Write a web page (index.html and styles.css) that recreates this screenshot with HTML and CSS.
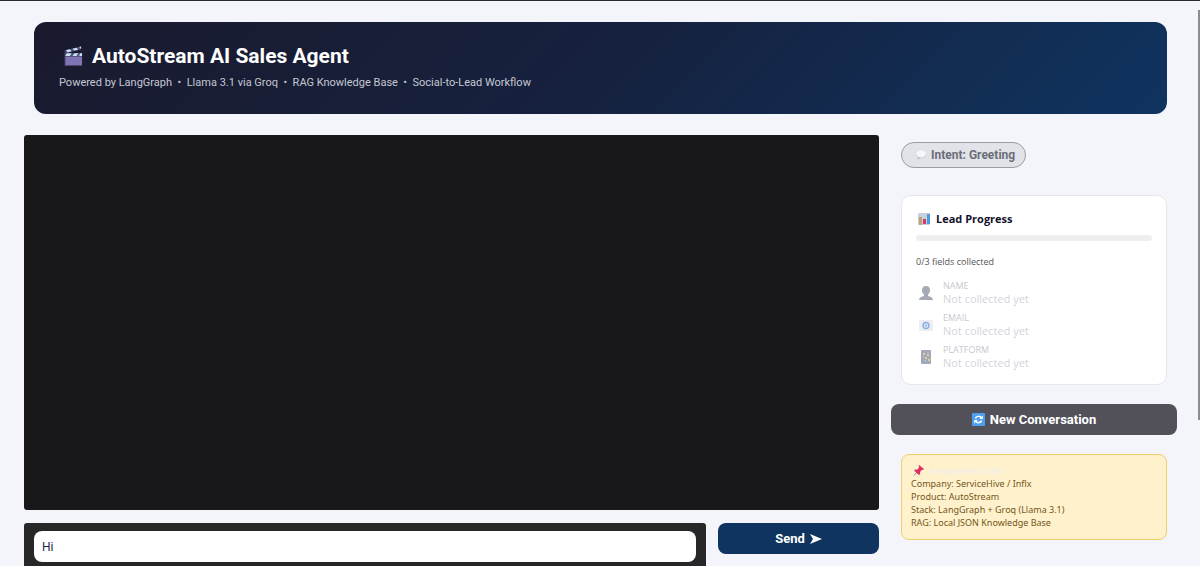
FILE: index.html
```
<!DOCTYPE html>
<html lang="en">
<head>
    <meta charset="UTF-8">
    <meta name="viewport" content="width=device-width, initial-scale=1.0">
    <title>AutoStream AI Sales Agent</title>
    <link rel="stylesheet" href="styles.css">
</head>
<body>
    <div class="app">
        <header class="header">
            <h1>
                <svg class="icon-clapper" viewBox="0 0 20 22" aria-hidden="true">
                    <rect x="1" y="9" width="18" height="12" fill="#8074b4"/>
                    <rect x="1" y="8" width="18" height="4" fill="#56547a"/>
                    <path d="M3 8h5l-2 3H1zM11 8h4l-2 3H9zM17 8h2v3h-3z" fill="#c6e2f5"/>
                    <path d="M1 5L18 1v3L2 8z" fill="#56547a"/>
                    <path d="M2 5l4-1 2 2-4 1zM9 3.300l4-1 2 2-4 1zM16 1.500l2-.5v2.500z" fill="#c6e2f5"/>
                    <path d="M1 5v16" stroke="#41405f" stroke-width="1"/>
                </svg>
                AutoStream AI Sales Agent
            </h1>
            <p>Powered by LangGraph &nbsp;•&nbsp; Llama 3.1 via Groq &nbsp;•&nbsp; RAG Knowledge Base &nbsp;•&nbsp; Social-to-Lead Workflow</p>
        </header>

        <div class="row">
            <main class="chat-col">
                <div class="chatbot"></div>
                <form class="composer">
                    <div class="input-box">
                        <input type="text" class="message" value="Hi" aria-label="Message">
                    </div>
                    <button type="button" class="btn btn-send">Send
                        <svg class="icon-send" viewBox="0 0 12 10" aria-hidden="true"><path d="M0 0l12 5-12 5 3-5z" fill="#fff"/></svg>
                    </button>
                </form>
            </main>

            <aside class="side-col">
                <div class="intent">
                    <svg class="icon-bubble" viewBox="0 0 12 12" aria-hidden="true">
                        <path d="M6 2c3 0 5 1.500 5 3.500S9 9 6 9L2 10.500 3 8.500C1.500 8 1 7 1 5.500 1 3.500 3 2 6 2z" fill="#b9bbc5"/>
                        <ellipse cx="6" cy="5" rx="5" ry="3.400" fill="#f5f6fa"/>
                    </svg>
                    Intent: Greeting
                </div>

                <section class="card">
                    <h2>
                        <svg class="icon-chart" viewBox="0 0 12 12" aria-hidden="true">
                            <rect width="12" height="12" rx="1" fill="#c9d0da"/>
                            <rect x="1" y="4" width="3" height="8" fill="#b8a678"/>
                            <rect x="5" y="6" width="3" height="5" fill="#d83a6c"/>
                            <rect x="9" y="1" width="3" height="10" fill="#4a9be0"/>
                        </svg>
                        Lead Progress
                    </h2>
                    <div class="bar"></div>
                    <p class="count">0/3 fields collected</p>
                    <ul class="fields">
                        <li>
                            <svg class="icon-field" viewBox="0 0 14 16" aria-hidden="true">
                                <path d="M7 1c2.500 0 4 1.500 4 4 0 2-.8 3.500-2 4.500v1.500c2 .6 4.500 1 5 4H0c.5-3 3-3.400 5-4V9.500C3.800 8.500 3 7 3 5c0-2.500 1.500-4 4-4z" fill="#a6aab5"/>
                            </svg>
                            <div><span class="label">NAME</span><span class="value">Not collected yet</span></div>
                        </li>
                        <li>
                            <svg class="icon-field" viewBox="0 0 14 16" aria-hidden="true">
                                <rect y="3" width="14" height="11" fill="#eceef2"/>
                                <circle cx="7" cy="8.500" r="3" fill="#dbe7f7" stroke="#8aaee0" stroke-width="1.400"/>
                                <circle cx="7" cy="8.500" r="1" fill="#8aaee0"/>
                            </svg>
                            <div><span class="label">EMAIL</span><span class="value">Not collected yet</span></div>
                        </li>
                        <li>
                            <svg class="icon-field" viewBox="0 0 14 16" aria-hidden="true">
                                <rect x="2" y="1" width="10" height="14" rx="1" fill="#a2a8b8"/>
                                <path d="M4 4h2v2H4zM8 5h2v2H8zM6 8h2v2H6zM9 10h2v2H9z" fill="#e6d08c"/>
                                <path d="M8 3h2v1H8zM4 7h1v2H4zM5 11h2v1H5z" fill="#9cc4ee"/>
                            </svg>
                            <div><span class="label">PLATFORM</span><span class="value">Not collected yet</span></div>
                        </li>
                    </ul>
                </section>

                <button type="button" class="btn btn-new">
                    <svg class="icon-refresh" viewBox="0 0 13 13" aria-hidden="true">
                        <rect width="13" height="13" rx="1" fill="#4c9ff0"/>
                        <path d="M3.500 5.500C4 3 8 2.500 9.500 5M9.500 7.500C9 10 5 10.500 3.500 8" fill="none" stroke="#fff" stroke-width="1.500"/>
                        <path d="M10.800 2.500v3.500H7.300zM2.200 10.500V7h3.500z" fill="#fff"/>
                    </svg>
                    New Conversation
                </button>

                <section class="note">
                    <h3>
                        <svg class="icon-pin" viewBox="0 0 11 11" aria-hidden="true">
                            <path d="M4 7L1 10.500" stroke="#8b8f98" stroke-width="1"/>
                            <path d="M6 0l5 4-1 1-1-.2-2 2.200.2 2L6 10 1 5.500l1-1 2 .2L6.200 2.500 5.500 1z" fill="#dd2f62"/>
                        </svg>
                        Assignment Info
                    </h3>
                    <p>Company: ServiceHive / Inflx</p>
                    <p>Product: AutoStream</p>
                    <p>Stack: LangGraph + Groq (Llama 3.1)</p>
                    <p>RAG: Local JSON Knowledge Base</p>
                </section>
            </aside>
        </div>
    </div>
    <div class="scroll-thumb"></div>
</body>
</html>
```

FILE: styles.css
```
*{
    box-sizing: border-box;
    margin: 0;
    padding: 0;
}
body{
    height: 100vh;
    overflow: hidden;
    border-top: 1px solid #2b2836;
    background: #f4f5fa;
    font-family: Roboto, "Noto Sans", sans-serif;
}
ul{
    list-style: none;
}
svg{
    flex: none;
}
.app{
    padding: 21px 23px 0 24px;
}
.header{
    height: 92px;
    margin: 0 10px 21px;
    padding: 20px 25px;
    border-radius: 12px;
    background: linear-gradient(135deg, #1a1a2e 0%, #16213e 50%, #0f3460 100%);
    color: #fff;
}
.header h1{
    display: flex;
    align-items: center;
    gap: 9px;
    padding-left: 5px;
    font-size: 21px;
    line-height: 28px;
    font-weight: 700;
}
.header p{
    margin-top: 5px;
    font-size: 11px;
    line-height: 16px;
    color: #c5c8d2;
}
.icon-clapper{
    width: 19px;
    height: 22px;
}

/* columns */
.row{
    display: flex;
    gap: 12px;
    align-items: flex-start;
}
.chat-col{
    flex: 3;
}
.side-col{
    flex: 1;
    min-width: 286px;
}
.chatbot{
    height: 375px;
    border-radius: 3px;
    background: #18181a;
}
.composer{
    display: flex;
    align-items: flex-start;
    gap: 12px;
    margin-top: 13px;
}
.input-box{
    flex: 1;
    height: 56px;
    padding: 8px 10px;
    border-radius: 3px;
    background: #27272a;
}
.message{
    display: block;
    width: 100%;
    height: 31px;
    padding: 0 8px;
    border: 0;
    border-radius: 8px;
    background: #fff;
    color: #1a2a4e;
    font-family: inherit;
    font-size: 12px;
}
.btn{
    display: flex;
    align-items: center;
    justify-content: center;
    gap: 5px;
    height: 31px;
    border: 0;
    border-radius: 8px;
    color: #fff;
    font-family: inherit;
    font-size: 13px;
    font-weight: 700;
}
.btn-send{
    width: 161px;
    background: #0f3460;
}
.icon-send{
    width: 12px;
    height: 10px;
}

/* side */
.intent{
    display: inline-flex;
    align-items: center;
    gap: 4px;
    height: 26px;
    margin: 7px 10px 27px;
    padding: 0 10px 0 13px;
    border: 1px solid #9a9ca3;
    border-radius: 13px;
    background: #e1e3e8;
    color: #6b6e78;
    font-size: 12px;
    font-weight: 700;
    vertical-align: top;
}
.icon-bubble{
    width: 12px;
    height: 12px;
}
.card{
    height: 190px;
    margin: 0 10px 19px;
    padding: 14px;
    border: 1px solid #e6e7ec;
    border-radius: 10px;
    background: #fff;
}
.card h2{
    display: flex;
    align-items: center;
    gap: 6px;
    padding-left: 2px;
    color: #12122a;
    font-family: "Open Sans", sans-serif;
    font-size: 11px;
    line-height: 18px;
    font-weight: 700;
}
.icon-chart{
    width: 12px;
    height: 12px;
}
.bar{
    height: 6px;
    margin-top: 7px;
    border-radius: 3px;
    background: #eeeeef;
}
.count{
    margin-top: 14px;
    color: #555;
    font-family: "Open Sans", sans-serif;
    font-size: 9px;
    line-height: 14px;
}
.fields{
    margin-top: 8px;
}
.fields li{
    display: flex;
    align-items: center;
    gap: 10px;
    height: 32px;
    padding-left: 3px;
}
.icon-field{
    width: 14px;
    height: 16px;
}
.label, .value{
    display: block;
    font-family: "Open Sans", sans-serif;
}
.label{
    color: #c6c8cf;
    font-size: 9px;
    line-height: 12px;
}
.value{
    color: #d2d4da;
    font-size: 11px;
    line-height: 14px;
}
.btn-new{
    width: 100%;
    background: #52515a;
}
.icon-refresh{
    width: 13px;
    height: 13px;
}
.note{
    height: 86px;
    margin: 19px 10px 0;
    padding: 9px;
    border: 1px solid #f0cf68;
    border-radius: 8px;
    background: #fff1cc;
    color: #73561a;
    font-family: "Noto Sans", sans-serif;
    font-size: 9px;
    line-height: 13px;
}
.note h3{
    display: flex;
    align-items: center;
    gap: 4px;
    padding-left: 2px;
    color: #f4efe6;
    font-size: 9px;
    line-height: 13px;
}
.icon-pin{
    width: 11px;
    height: 11px;
}

/* thin scrollbar over the page edge */
.scroll-thumb{
    position: fixed;
    top: 10px;
    right: 0;
    width: 2px;
    height: 410px;
    background: #8b8c91;
}
```
